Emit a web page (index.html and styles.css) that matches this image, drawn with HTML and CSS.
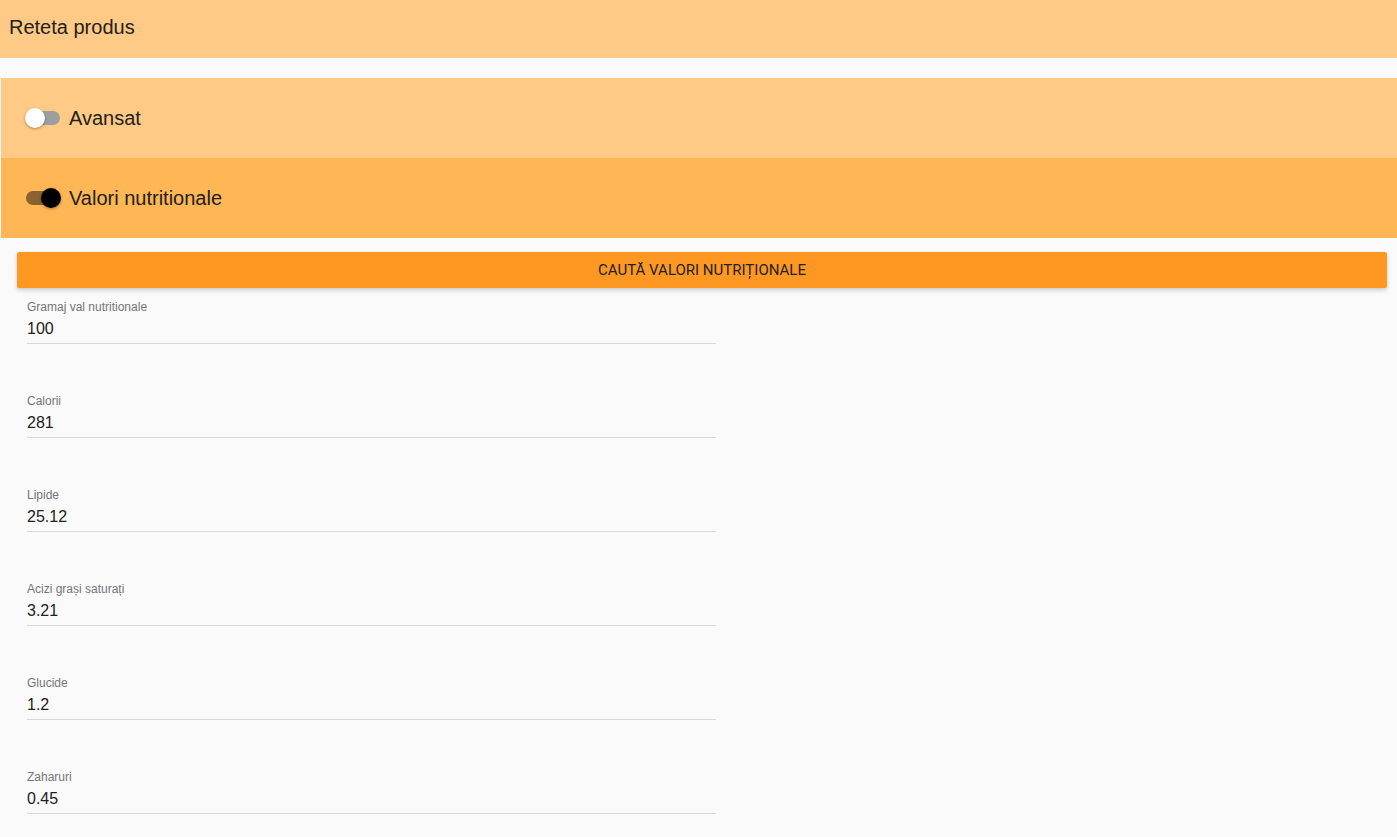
FILE: index.html
```
<!DOCTYPE html>
<html lang="ro">
<head>
    <meta charset="UTF-8">
    <meta name="viewport" content="width=device-width, initial-scale=1.0">
    <title>Reteta produs</title>
    <link rel="stylesheet" href="styles.css">
</head>
<body>
    <div class="toolbar">Reteta produs</div>

    <div class="panels">
        <label class="panel panel-light">
            <span class="switch">
                <span class="switch-track"></span>
                <span class="switch-thumb"></span>
            </span>
            <span class="panel-title">Avansat</span>
        </label>
        <label class="panel panel-dark">
            <span class="switch switch-on">
                <span class="switch-track"></span>
                <span class="switch-thumb"></span>
            </span>
            <span class="panel-title">Valori nutritionale</span>
        </label>
    </div>

    <div class="content">
        <button type="button" class="btn-search">Caută valori nutriționale</button>

        <div class="fields">
            <div class="field">
                <div class="field-label">Gramaj val nutritionale</div>
                <div class="field-value">100</div>
            </div>
            <div class="field">
                <div class="field-label">Calorii</div>
                <div class="field-value">281</div>
            </div>
            <div class="field">
                <div class="field-label">Lipide</div>
                <div class="field-value">25.12</div>
            </div>
            <div class="field">
                <div class="field-label">Acizi grași saturați</div>
                <div class="field-value">3.21</div>
            </div>
            <div class="field">
                <div class="field-label">Glucide</div>
                <div class="field-value">1.2</div>
            </div>
            <div class="field">
                <div class="field-label">Zaharuri</div>
                <div class="field-value">0.45</div>
            </div>
        </div>
    </div>
</body>
</html>
```

FILE: styles.css
```
:root {
    --header-color: #ffca85;
    --panel-active: #ffb655;
    --accent-color: #ff9822;
    --background-color: #fafafa;
    --text-primary: #212121;
    --text-secondary: #757575;
    --border-color: #d9d9d9;
}

* {
    margin: 0;
    padding: 0;
    box-sizing: border-box;
}

body {
    font-family: 'Liberation Sans', Arial, sans-serif;
    background-color: var(--background-color);
    color: var(--text-primary);
    overflow: hidden;
}

.toolbar {
    height: 58px;
    background-color: var(--header-color);
    padding: 0 0 4px 9px;
    display: flex;
    align-items: center;
    font-size: 20px;
    margin-bottom: 20px;
}

.panels {
    margin-left: 1px;
}

.panel {
    height: 80px;
    display: flex;
    align-items: center;
    padding-left: 24px;
    cursor: pointer;
}

.panel-light {
    background-color: var(--header-color);
}

.panel-dark {
    background-color: var(--panel-active);
}

.panel-title {
    font-size: 20px;
    margin-left: 8px;
}

/* material-like switch */
.switch {
    position: relative;
    width: 36px;
    height: 20px;
    display: inline-block;
}

.switch-track {
    position: absolute;
    left: 1px;
    top: 3px;
    width: 34px;
    height: 14px;
    border-radius: 7px;
    background-color: #9e9e9e;
}

.switch-thumb {
    position: absolute;
    left: 0;
    top: 0;
    width: 20px;
    height: 20px;
    border-radius: 50%;
    background-color: #fff;
    box-shadow: 0 1px 3px rgba(0,0,0,0.35);
}

.switch-on .switch-track {
    background-color: #8a6230;
}

.switch-on .switch-thumb {
    left: 16px;
    background-color: #000;
}

.content {
    padding: 14px 10px 0 17px;
}

.btn-search {
    display: block;
    width: 100%;
    height: 36px;
    border: none;
    border-radius: 2px;
    background-color: var(--accent-color);
    color: var(--text-primary);
    font-family: Roboto, sans-serif;
    font-size: 15px;
    text-transform: uppercase;
    box-shadow: 0 2px 4px rgba(0,0,0,0.2);
    cursor: pointer;
}

.fields {
    width: 699px;
    padding: 12px 0 0 10px;
}

.field {
    border-bottom: 1px solid var(--border-color);
    padding-bottom: 4px;
    margin-bottom: 50px;
}

.field-label {
    font-size: 12px;
    line-height: 14px;
    color: var(--text-secondary);
    margin-bottom: 5px;
}

.field-value {
    font-size: 16px;
    line-height: 20px;
}
```
